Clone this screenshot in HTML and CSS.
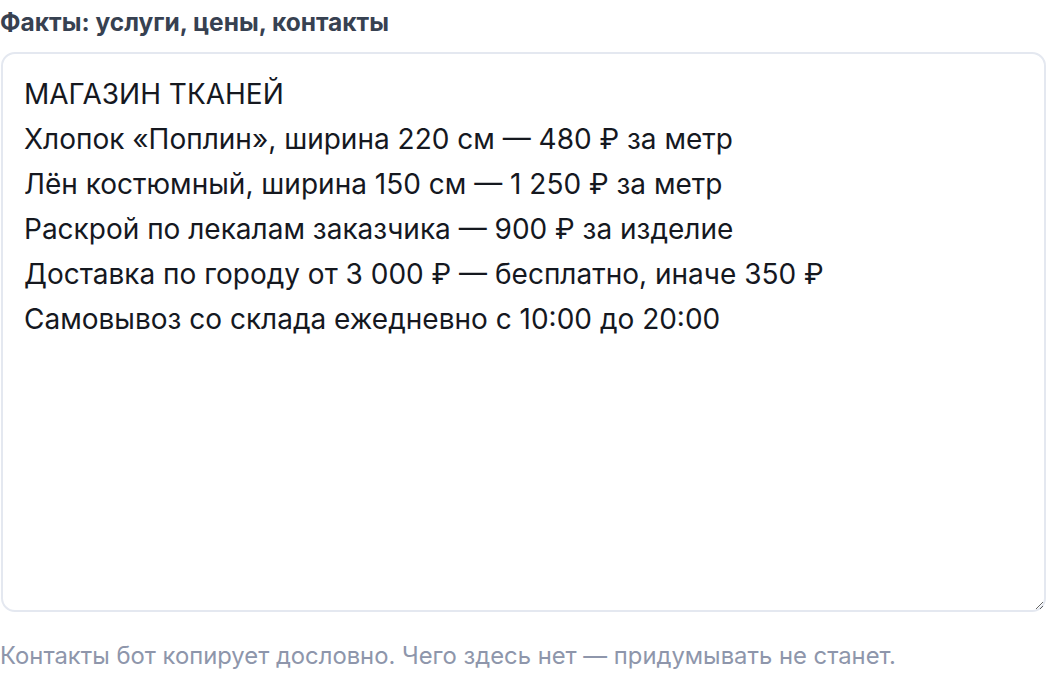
FILE: index.html
```html
<!DOCTYPE html>
<html lang="ru">
<head>
<meta charset="utf-8">
<link rel="stylesheet" href="styles.css">
</head>
<body>
<div class="field">
  <label class="field-label" for="facts">Факты: услуги, цены, контакты</label>
  <textarea id="facts" class="field-input">МАГАЗИН ТКАНЕЙ
Хлопок «Поплин», ширина 220 см — 480 ₽ за метр
Лён костюмный, ширина 150 см — 1 250 ₽ за метр
Раскрой по лекалам заказчика — 900 ₽ за изделие
Доставка по городу от 3 000 ₽ — бесплатно, иначе 350 ₽
Самовывоз со склада ежедневно с 10:00 до 20:00</textarea>
  <p class="field-hint">Контакты бот копирует дословно. Чего здесь нет — придумывать не станет.</p>
</div>
</body>
</html>
```

FILE: styles.css
```css
html, body {
  margin: 0;
  padding: 0;
  background: #ffffff;
}
body {
  font-family: Inter, Roboto, "Liberation Sans", sans-serif;
}
.field {
  display: flex;
  flex-direction: column;
  padding: 8px 2px 0 0;
}
.field-label {
  font-size: 24.5px;
  font-weight: 700;
  color: #374151;
  line-height: 28px;
}
.field-input {
  box-sizing: border-box;
  margin: 16px 0 0 1px;
  width: 1045px;
  height: 560px;
  border: 2px solid #e4e8f0;
  border-radius: 14px;
  padding: 18px 21px 20px;
  font-family: Inter, Roboto, "Liberation Sans", sans-serif;
  font-size: 28px;
  line-height: 45px;
  color: #15181f;
  background: #ffffff;
  outline: none;
  resize: vertical;
}
.field-hint {
  margin: 30px 0 0 0;
  font-size: 23.8px;
  line-height: 28px;
  color: #8e96ab;
}
```
